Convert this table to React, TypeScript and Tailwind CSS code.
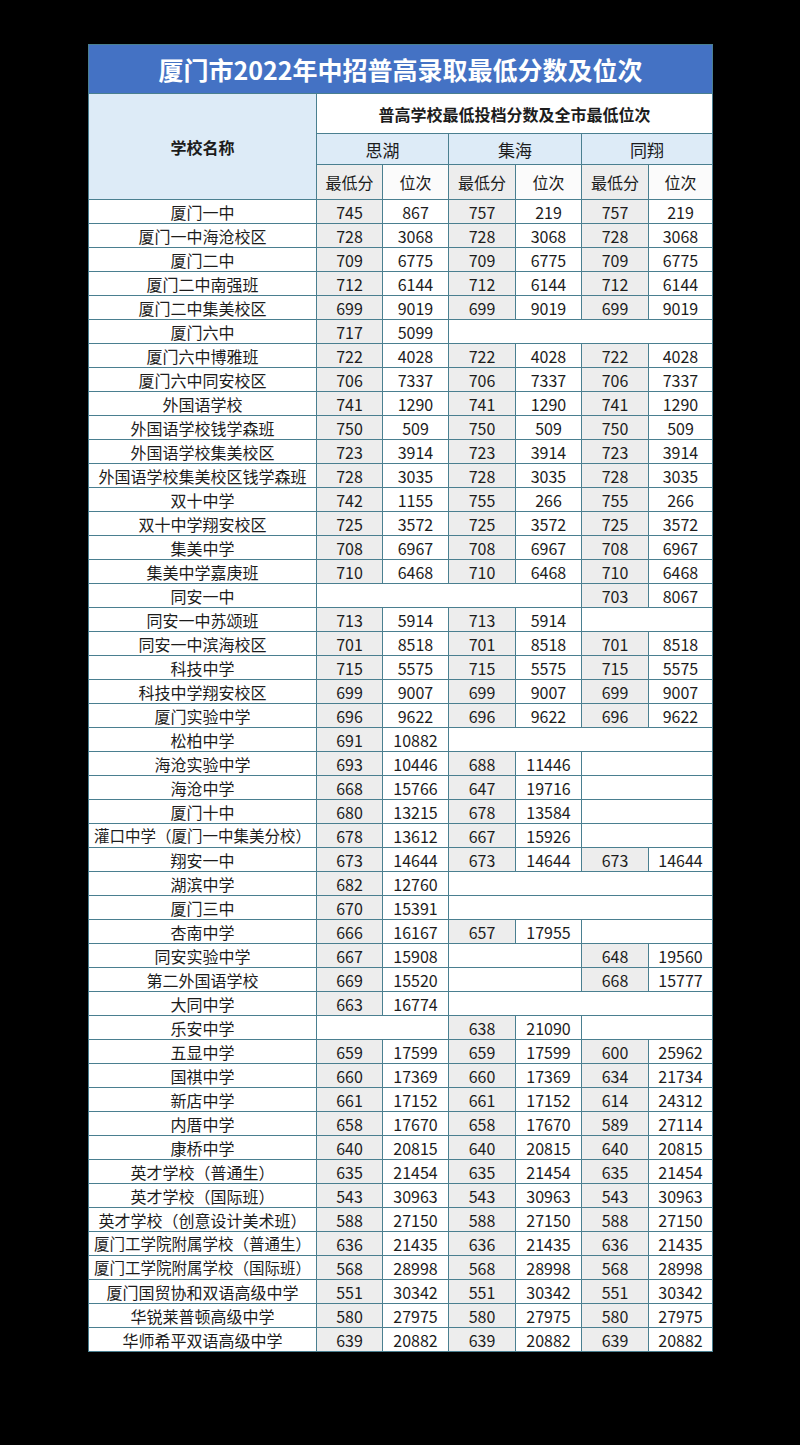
type Pair = [number, number] | null;
type Row = [string, Pair, Pair, Pair];

const rows: Row[] = [
  ["厦门一中", [745, 867], [757, 219], [757, 219]],
  ["厦门一中海沧校区", [728, 3068], [728, 3068], [728, 3068]],
  ["厦门二中", [709, 6775], [709, 6775], [709, 6775]],
  ["厦门二中南强班", [712, 6144], [712, 6144], [712, 6144]],
  ["厦门二中集美校区", [699, 9019], [699, 9019], [699, 9019]],
  ["厦门六中", [717, 5099], null, null],
  ["厦门六中博雅班", [722, 4028], [722, 4028], [722, 4028]],
  ["厦门六中同安校区", [706, 7337], [706, 7337], [706, 7337]],
  ["外国语学校", [741, 1290], [741, 1290], [741, 1290]],
  ["外国语学校钱学森班", [750, 509], [750, 509], [750, 509]],
  ["外国语学校集美校区", [723, 3914], [723, 3914], [723, 3914]],
  ["外国语学校集美校区钱学森班", [728, 3035], [728, 3035], [728, 3035]],
  ["双十中学", [742, 1155], [755, 266], [755, 266]],
  ["双十中学翔安校区", [725, 3572], [725, 3572], [725, 3572]],
  ["集美中学", [708, 6967], [708, 6967], [708, 6967]],
  ["集美中学嘉庚班", [710, 6468], [710, 6468], [710, 6468]],
  ["同安一中", null, null, [703, 8067]],
  ["同安一中苏颂班", [713, 5914], [713, 5914], null],
  ["同安一中滨海校区", [701, 8518], [701, 8518], [701, 8518]],
  ["科技中学", [715, 5575], [715, 5575], [715, 5575]],
  ["科技中学翔安校区", [699, 9007], [699, 9007], [699, 9007]],
  ["厦门实验中学", [696, 9622], [696, 9622], [696, 9622]],
  ["松柏中学", [691, 10882], null, null],
  ["海沧实验中学", [693, 10446], [688, 11446], null],
  ["海沧中学", [668, 15766], [647, 19716], null],
  ["厦门十中", [680, 13215], [678, 13584], null],
  ["灌口中学（厦门一中集美分校）", [678, 13612], [667, 15926], null],
  ["翔安一中", [673, 14644], [673, 14644], [673, 14644]],
  ["湖滨中学", [682, 12760], null, null],
  ["厦门三中", [670, 15391], null, null],
  ["杏南中学", [666, 16167], [657, 17955], null],
  ["同安实验中学", [667, 15908], null, [648, 19560]],
  ["第二外国语学校", [669, 15520], null, [668, 15777]],
  ["大同中学", [663, 16774], null, null],
  ["乐安中学", null, [638, 21090], null],
  ["五显中学", [659, 17599], [659, 17599], [600, 25962]],
  ["国祺中学", [660, 17369], [660, 17369], [634, 21734]],
  ["新店中学", [661, 17152], [661, 17152], [614, 24312]],
  ["内厝中学", [658, 17670], [658, 17670], [589, 27114]],
  ["康桥中学", [640, 20815], [640, 20815], [640, 20815]],
  ["英才学校（普通生）", [635, 21454], [635, 21454], [635, 21454]],
  ["英才学校（国际班）", [543, 30963], [543, 30963], [543, 30963]],
  ["英才学校（创意设计美术班）", [588, 27150], [588, 27150], [588, 27150]],
  ["厦门工学院附属学校（普通生）", [636, 21435], [636, 21435], [636, 21435]],
  ["厦门工学院附属学校（国际班）", [568, 28998], [568, 28998], [568, 28998]],
  ["厦门国贸协和双语高级中学", [551, 30342], [551, 30342], [551, 30342]],
  ["华锐莱普顿高级中学", [580, 27975], [580, 27975], [580, 27975]],
  ["华师希平双语高级中学", [639, 20882], [639, 20882], [639, 20882]],
];

const cell = "flex items-center justify-center";

// runs of empty districts collapse into one blank cell
function DataCells({ pairs }: { pairs: Pair[] }) {
  const out: React.ReactNode[] = [];
  let i = 0;
  while (i < pairs.length) {
    const p = pairs[i];
    if (p) {
      out.push(
        <div key={`s${i}`} className={`${cell} bg-[#ededed]`}>{p[0]}</div>,
        <div key={`r${i}`} className={`${cell} bg-white`}>{p[1]}</div>
      );
      i++;
    } else {
      let n = 0;
      while (i + n < pairs.length && !pairs[i + n]) n++;
      const span = n === 3 ? "col-span-6" : n === 2 ? "col-span-4" : "col-span-2";
      out.push(<div key={`b${i}`} className={`${span} bg-white`} />);
      i += n;
    }
  }
  return <>{out}</>;
}

export default function App() {
  return (
    <div className="w-[800px] h-[1445px] bg-black pt-[44px] pl-[88px] font-['Noto_Sans_CJK_SC','Noto_Sans',sans-serif] text-[#1c1c1c]">
      <div className="w-[625px] bg-[#4a7f90] p-px grid gap-px grid-cols-[227px_65px_65px_66px_65px_66px_63px] grid-rows-[48px_39px_30px_34px] auto-rows-[23px] text-[16px] leading-none">
        <div className={`${cell} col-span-7 bg-[#4472c4] text-white text-[25px] font-bold`}>
          厦门市2022年中招普高录取最低分数及位次
        </div>
        <div className={`${cell} row-span-3 bg-[#ddebf7] font-bold text-[16px]`}>学校名称</div>
        <div className={`${cell} col-span-6 bg-white font-bold text-[16px]`}>普高学校最低投档分数及全市最低位次</div>
        <div className={`${cell} col-span-2 bg-[#ddebf7] text-[17px]`}>思湖</div>
        <div className={`${cell} col-span-2 bg-[#ddebf7] text-[17px]`}>集海</div>
        <div className={`${cell} col-span-2 bg-[#ddebf7] text-[17px]`}>同翔</div>
        {[0, 1, 2].map((k) => (
          <div key={k} className="contents">
            <div className={`${cell} bg-[#ededed]`}>最低分</div>
            <div className={`${cell} bg-[#fbfbfb]`}>位次</div>
          </div>
        ))}
        {rows.map(([name, a, b, c]) => (
          <div key={name} className="contents">
            <div className={`${cell} bg-white whitespace-nowrap ${name.length >= 14 ? "text-[15.5px]" : ""}`}>{name}</div>
            <DataCells pairs={[a, b, c]} />
          </div>
        ))}
      </div>
    </div>
  );
}
